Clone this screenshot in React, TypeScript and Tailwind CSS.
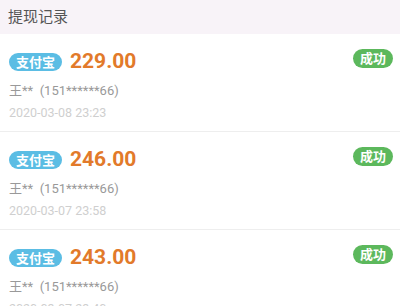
import React from 'react';

const records = [
  { amount: '229.00', name: '王**', phone: '(151******66)', time: '2020-03-08 23:23' },
  { amount: '246.00', name: '王**', phone: '(151******66)', time: '2020-03-07 23:58' },
  { amount: '243.00', name: '王**', phone: '(151******66)', time: '2020-03-07 23:40' },
];

const App: React.FC = () => {
  return (
    <div className="w-[400px] h-[306px] overflow-hidden bg-white font-['Roboto','Noto_Sans_CJK_SC',sans-serif]">
      <div className="h-[34px] bg-[#f8f3f8] flex items-center px-2 text-[15px] text-[#555]">
        提现记录
      </div>

      {records.map((r, i) => (
        <div key={i} className="pt-[15px] pb-[9px] pl-[9px] pr-[7px] border-b border-[#eeeeee]">
          <div className="h-6 flex items-center">
            <span className="mt-[2px] h-[18px] w-[53px] rounded-full bg-[#5bbde4] text-white text-[13px] font-bold flex items-center justify-center leading-none">
              支付宝
            </span>
            <span className="ml-2 text-[21px] font-bold text-[#e27a2a] leading-none">{r.amount}</span>
            <span className="ml-auto self-start h-[19px] w-[40px] rounded-full bg-[#5cb85c] text-white text-[13px] font-bold flex items-center justify-center leading-none">
              成功
            </span>
          </div>
          <div className="mt-[9px] leading-[18px] text-[13px] text-[#999]">
            {r.name}&nbsp;&nbsp;{r.phone}
          </div>
          <div className="mt-1 leading-[18px] text-[12.5px] text-[#cfcfcf]">{r.time}</div>
        </div>
      ))}
    </div>
  );
};

export default App;
